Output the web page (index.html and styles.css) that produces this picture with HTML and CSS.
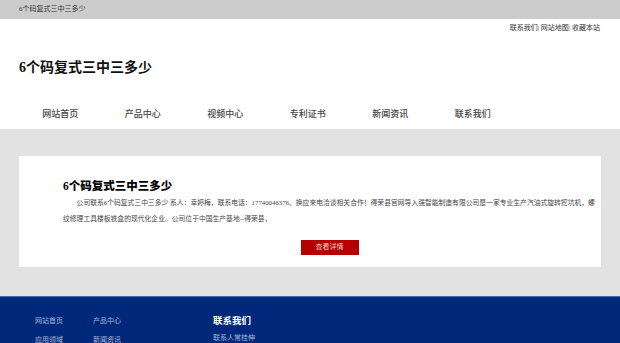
FILE: index.html
```html
<!DOCTYPE html>
<html lang="zh-CN">
<head>
<meta charset="utf-8">
<title>6个码复式三中三多少</title>
<link rel="stylesheet" href="styles.css">
</head>
<body>
<div class="topbar">6个码复式三中三多少</div>
<div class="header">
  <div class="toplinks"><a>联系我们</a>| <a>网站地图</a>| <a>收藏本站</a></div>
  <h1 class="logo">6个码复式三中三多少</h1>
  <ul class="nav">
    <li>网站首页</li>
    <li>产品中心</li>
    <li>视频中心</li>
    <li>专利证书</li>
    <li>新闻资讯</li>
    <li>联系我们</li>
  </ul>
</div>
<div class="main">
  <div class="card">
    <h2 class="card-title">6个码复式三中三多少</h2>
    <p class="card-text">公司联系6个码复式三中三多少 系人：幸婷梅，联系电话：17740046376。换应来电洽谈相关合作！得荣县官网导入强智能制造有限公司是一家专业生产汽油式旋转挖坑机，螺纹修理工具楼板铁盒的现代化企业。公司位于中国生产基地--得荣县，</p>
    <div class="btn-row"><a class="btn">查看详情</a></div>
  </div>
</div>
<div class="footer">
  <div class="footer-links">
    <a>网站首页</a><a>产品中心</a>
    <a>应用领域</a><a>新闻资讯</a>
  </div>
  <div class="footer-contact">
    <h3>联系我们</h3>
    <p>联系人常桂伸</p>
  </div>
</div>
</body>
</html>
```
FILE: styles.css
```css
* { box-sizing: border-box; }
html, body { margin: 0; padding: 0; }
body {
  font-family: "Liberation Serif", "Noto Sans CJK SC", serif;
  color: #333;
  background: #fff;
  overflow: hidden;
}
.topbar {
  height: 19px;
  line-height: 19px;
  background: #cccccc;
  padding-left: 19px;
  font-size: 7px;
  color: #333;
}
.header {
  width: 582px;
  margin: 0 auto;
}
.toplinks {
  text-align: right;
  font-size: 7px;
  line-height: 10px;
  padding-top: 4px;
  padding-right: 1px;
  color: #333;
}
.toplinks a { color: #333; }
.logo {
  margin: 0;
  font-size: 14px;
  line-height: 20px;
  padding-top: 25px;
  font-weight: bold;
  color: #111;
}
.nav {
  list-style: none;
  margin: 0;
  padding: 28px 0 0;
  display: flex;
  height: 51px;
}
.nav li {
  width: 82.5px;
  text-align: center;
  font-size: 9px;
  line-height: 16px;
  height: 16px;
  color: #444;
  font-weight: 500;
}
.main {
  background: #e2e2e2;
  padding: 27px 19px 29px;
}
.card {
  background: #fff;
  padding: 22px 5px 12px 44px;
  height: 111px;
}
.card-title {
  margin: 0;
  font-size: 11.5px;
  line-height: 16px;
  font-weight: 900;
  color: #000;
}
.card-text {
  margin: 1px 0 0;
  font-size: 6.8px;
  line-height: 16px;
  text-indent: 2em;
  color: #444;
}
.btn-row {
  display: flex;
  justify-content: center;
  margin-top: 13px;
}
.btn {
  display: block;
  width: 58px;
  height: 15px;
  line-height: 15px;
  text-align: center;
  background: #b30000;
  color: #f3c4c4;
  font-size: 7px;
}
.footer {
  background: #00287a;
  border-top: 1px solid #3d6fb0;
  height: 60px;
  display: flex;
  padding: 17px 0 0 35px;
}
.footer-links {
  width: 178px;
  display: grid;
  grid-template-columns: 58px 58px;
  grid-auto-rows: 19px;
  font-size: 7px;
  color: #a9b6d6;
  line-height: 14px;
}
.footer-contact h3 {
  margin: 0;
  font-size: 9.5px;
  line-height: 14px;
  color: #fff;
  font-weight: bold;
}
.footer-contact p {
  margin: 3px 0 0;
  font-size: 7px;
  line-height: 14px;
  color: #a9b6d6;
}
```
